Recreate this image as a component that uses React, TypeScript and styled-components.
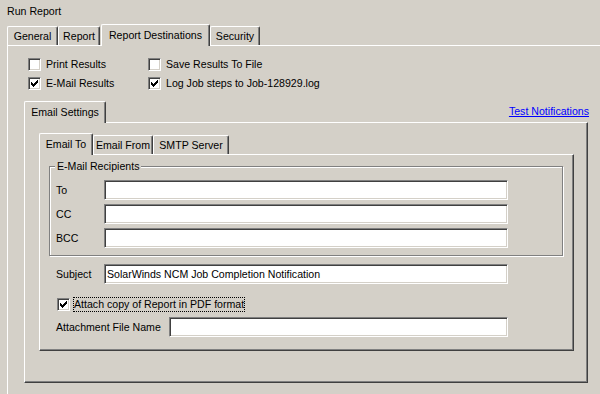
import styled, { createGlobalStyle } from 'styled-components';

let GlobalStyle = createGlobalStyle`
  html, body {
    margin: 0;
    padding: 0;
    background: #d4d0c8;
    overflow: hidden;
  }

  body {
    font-family: 'Liberation Sans', Arial, sans-serif;
    font-size: 10.6px;
    line-height: 13px;
    color: #000000;
  }
`;

let Window = styled.div`
  width: 600px;
  height: 394px;
  box-sizing: border-box;
  padding: 5px 0 0 7px;
  overflow: hidden;
`;

let Title = styled.div`
  height: 13px;
  white-space: nowrap;
`;

let TabStrip = styled.div<{ $top?: number }>`
  display: flex;
  align-items: flex-end;
  height: 21px;
  margin-top: ${p => p.$top ?? 0}px;
`;

let Tab = styled.div<{ $active?: boolean; $w: number; $ml?: number }>`
  box-sizing: border-box;
  width: ${p => p.$w}px;
  height: ${p => (p.$active ? 22 : 19)}px;
  margin-left: ${p => p.$ml ?? 0}px;
  margin-bottom: ${p => (p.$active ? -1 : 0)}px;
  padding-top: ${p => (p.$active ? 4 : 3)}px;
  text-align: center;
  white-space: nowrap;
  background: #d4d0c8;
  border-top: 1px solid #ffffff;
  border-left: 1px solid #ffffff;
  border-right: 1px solid #404040;
  border-radius: 2px 2px 0 0;
  box-shadow: inset -1px 0 0 #808080;
  position: relative;
  z-index: ${p => (p.$active ? 1 : 0)};
`;

let Sheet = styled.div`
  width: 640px;
  height: 400px;
  box-sizing: border-box;
  border-top: 1px solid #ffffff;
  border-left: 1px solid #ffffff;
  padding: 12px 0 0 16px;
`;

let CheckGrid = styled.div`
  display: grid;
  grid-template-columns: 120px auto;
  row-gap: 6px;
  margin-left: 4px;
`;

let CheckItem = styled.label<{ $gap?: number; $ml?: number; $mt?: number }>`
  display: flex;
  align-items: center;
  gap: ${p => p.$gap ?? 5}px;
  margin-left: ${p => p.$ml ?? 0}px;
  margin-top: ${p => p.$mt ?? 0}px;
  white-space: nowrap;
`;

let Box = styled.span`
  box-sizing: border-box;
  flex: none;
  width: 13px;
  height: 13px;
  display: flex;
  align-items: center;
  justify-content: center;
  background: #ffffff;
  border: 1px solid;
  border-color: #808080 #ffffff #ffffff #808080;
  box-shadow: inset 1px 1px 0 #404040, inset -1px -1px 0 #d4d0c8;
`;

let FocusText = styled.span`
  border: 1px dotted #000000;
`;

let EmailSection = styled.div`
  width: 564px;
  margin-top: 11px;
`;

let SectionHeader = styled.div`
  display: flex;
  justify-content: space-between;
  align-items: flex-start;
`;

let LinkText = styled.a`
  margin-top: 4px;
  margin-right: -1px;
  color: #0000ff;
  text-decoration: underline;
  cursor: pointer;
  white-space: nowrap;
`;

let Panel = styled.div<{ $w: number }>`
  box-sizing: border-box;
  width: ${p => p.$w}px;
  border: 1px solid;
  border-color: #ffffff #404040 #404040 #ffffff;
  box-shadow: inset -1px -1px 0 #808080;
`;

let SettingsPanel = styled(Panel)`
  padding: 10px 0 31px 14px;
`;

let PagePanel = styled(Panel)`
  padding: 5px 0 13px 9px;
`;

let GroupBox = styled.fieldset`
  box-sizing: border-box;
  width: 514px;
  margin: 0;
  padding: 0;
  min-inline-size: 0;
  border: 1px solid #808080;
  box-shadow: 1px 1px 0 #ffffff, inset 1px 1px 0 #ffffff;
`;

let GroupTitle = styled.legend`
  margin-left: 5px;
  padding: 0 2px;
  line-height: 13px;
  background: #d4d0c8;
  white-space: nowrap;
`;

let FieldGrid = styled.div<{ $label: number; $input: number; $ml?: number; $mt?: number; $pad?: string }>`
  display: grid;
  grid-template-columns: ${p => p.$label}px ${p => p.$input}px;
  grid-auto-rows: 20px;
  row-gap: 4px;
  align-items: center;
  margin-left: ${p => p.$ml ?? 0}px;
  margin-top: ${p => p.$mt ?? 0}px;
  padding: ${p => p.$pad ?? '0'};
`;

let FieldLabel = styled.span`
  white-space: nowrap;
`;

let TextBox = styled.input`
  box-sizing: border-box;
  width: 100%;
  height: 20px;
  margin: 0;
  padding: 0 2px;
  border: 1px solid;
  border-color: #808080 #ffffff #ffffff #808080;
  box-shadow: inset 1px 1px 0 #404040, inset -1px -1px 0 #d4d0c8;
  background: #ffffff;
  font: inherit;
  color: #000000;
  outline: none;
`;

let CheckMark = () => (
  <svg width="7" height="7" viewBox="0 0 7 7" shapeRendering="crispEdges">
    <path
      d="M0 2h1v3H0zM1 3h1v3H1zM2 4h1v3H2zM3 3h1v3H3zM4 2h1v3H4zM5 1h1v3H5zM6 0h1v3H6z"
      fill="#000000"
    />
  </svg>
);

interface CheckProps {
  checked?: boolean;
}

let Check = ({ checked }: CheckProps) => <Box>{checked && <CheckMark />}</Box>;

let App = () => {
  return (
    <Window>
      <GlobalStyle />
      <Title>Run Report</Title>
      <TabStrip $top={6}>
        <Tab $w={51}>General</Tab>
        <Tab $w={42}>Report</Tab>
        <Tab $w={109} $ml={1} $active>
          Report Destinations
        </Tab>
        <Tab $w={50}>Security</Tab>
      </TabStrip>
      <Sheet>
        <CheckGrid>
          <CheckItem>
            <Check />
            Print Results
          </CheckItem>
          <CheckItem>
            <Check />
            Save Results To File
          </CheckItem>
          <CheckItem>
            <Check checked />
            E-Mail Results
          </CheckItem>
          <CheckItem>
            <Check checked />
            Log Job steps to Job-128929.log
          </CheckItem>
        </CheckGrid>

        <EmailSection>
          <SectionHeader>
            <TabStrip>
              <Tab $w={82} $active>
                Email Settings
              </Tab>
            </TabStrip>
            <LinkText>Test Notifications</LinkText>
          </SectionHeader>
          <SettingsPanel $w={564}>
            <TabStrip>
              <Tab $w={54} $active>
                Email To
              </Tab>
              <Tab $w={60}>Email From</Tab>
              <Tab $w={76}>SMTP Server</Tab>
            </TabStrip>
            <PagePanel $w={535}>
              <GroupBox>
                <GroupTitle>E-Mail Recipients</GroupTitle>
                <FieldGrid $label={48} $input={404} $pad="7px 0 7px 6px">
                  <FieldLabel>To</FieldLabel>
                  <TextBox defaultValue="" />
                  <FieldLabel>CC</FieldLabel>
                  <TextBox defaultValue="" />
                  <FieldLabel>BCC</FieldLabel>
                  <TextBox defaultValue="" />
                </FieldGrid>
              </GroupBox>
              <FieldGrid $label={48} $input={404} $ml={7} $mt={8}>
                <FieldLabel>Subject</FieldLabel>
                <TextBox defaultValue="SolarWinds NCM Job Completion Notification" />
              </FieldGrid>
              <CheckItem $gap={3} $ml={8} $mt={13}>
                <Check checked />
                <FocusText>Attach copy of Report in PDF format</FocusText>
              </CheckItem>
              <FieldGrid $label={113} $input={339} $ml={7} $mt={5}>
                <FieldLabel>Attachment File Name</FieldLabel>
                <TextBox defaultValue="" />
              </FieldGrid>
            </PagePanel>
          </SettingsPanel>
        </EmailSection>
      </Sheet>
    </Window>
  );
};

export default App;
